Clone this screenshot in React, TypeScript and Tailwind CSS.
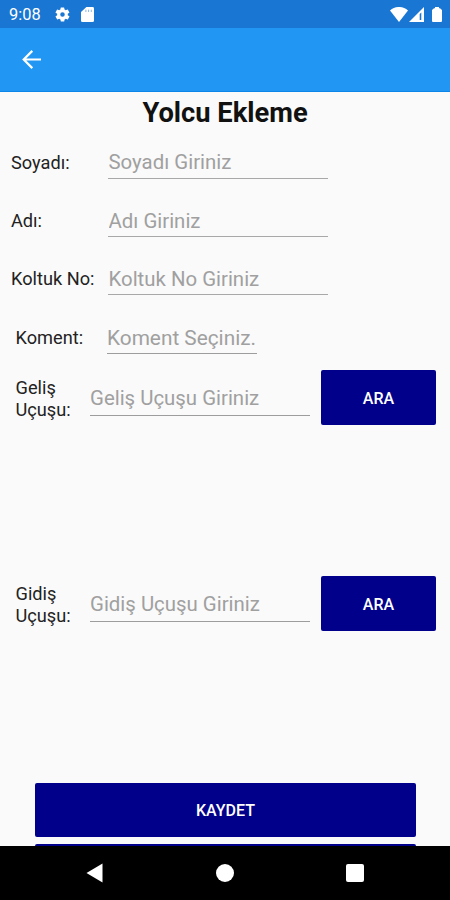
import React from 'react';

function Field({ placeholder, className }: { placeholder: string; className: string }) {
  return (
    <input
      type="text"
      placeholder={placeholder}
      className={`block rounded-none border-b bg-transparent p-0 leading-6 text-[#222] outline-none placeholder:text-[#a0a0a0] ${className}`}
    />
  );
}

function SimpleRow({ label, placeholder, className, fieldClass }: { label: string; placeholder: string; className: string; fieldClass: string }) {
  return (
    <div className={`flex pl-[11px] ${className}`}>
      <label className="w-[97px] shrink-0 pt-px text-[18.2px] leading-6 text-[#222]">{label}</label>
      <Field placeholder={placeholder} className={`h-[29px] w-[220px] border-[#a8a8a8] pl-[0.5px] text-[20.4px] ${fieldClass}`} />
    </div>
  );
}

function FlightRow({ first, placeholder, className }: { first: string; placeholder: string; className: string }) {
  return (
    <div className={`flex h-[55px] pl-[15px] ${className}`}>
      <label className="w-[75px] shrink-0 pt-[7px] pl-[0.5px] text-[18.2px] leading-[22px] text-[#222]">
        {first}
        <br />
        Uçuşu:
      </label>
      <Field placeholder={placeholder} className="mt-4 h-[30px] w-[220px] border-[#9d9d9d] pb-[5px] text-[20.4px]" />
      <button className="ml-[11px] h-[55px] w-[115px] rounded-[2px] bg-[#00008b] pt-[2px] text-[16px] font-medium text-white">
        ARA
      </button>
    </div>
  );
}

export default function App() {
  return (
    <div className="flex h-[900px] w-[450px] flex-col overflow-hidden bg-[#fafafa] font-[Roboto,sans-serif]">
      <div className="flex h-7 shrink-0 items-center bg-[#1976d2] text-white">
        <span className="ml-[9px] w-[45px] pt-[3px] text-[16.4px]">9:08</span>
        <svg className="h-[17px] w-[17px]" viewBox="0 0 24 24" fill="currentColor">
          <path d="M19.4 13a7.8 7.8 0 0 0 0-2l2.1-1.6a.5.5 0 0 0 .1-.7l-2-3.4a.5.5 0 0 0-.6-.2l-2.5 1a7.3 7.3 0 0 0-1.7-1l-.4-2.6a.5.5 0 0 0-.5-.5h-4a.5.5 0 0 0-.5.5L9 5.1a7.3 7.3 0 0 0-1.7 1l-2.5-1a.5.5 0 0 0-.6.2l-2 3.4a.5.5 0 0 0 .1.7L4.5 11a7.8 7.8 0 0 0 0 2l-2.1 1.6a.5.5 0 0 0-.1.7l2 3.4a.5.5 0 0 0 .6.2l2.5-1a7.3 7.3 0 0 0 1.7 1l.4 2.6a.5.5 0 0 0 .5.5h4a.5.5 0 0 0 .5-.5l.4-2.6a7.3 7.3 0 0 0 1.7-1l2.5 1a.5.5 0 0 0 .6-.2l2-3.4a.5.5 0 0 0-.1-.7zM12 15.2a3.2 3.2 0 1 1 0-6.4 3.2 3.2 0 0 1 0 6.4z" />
        </svg>
        <svg className="ml-[10px] h-[15px] w-[13px]" viewBox="0 0 12 15" preserveAspectRatio="none">
          <path d="M5 0h5.7Q12 0 12 1.3v12.2Q12 15 10.7 15H1.3Q0 15 0 13.5V5z" fill="white" />
          <path d="M4.5 2.7v2.3M7 2.7v2.3M9.5 2.7v2.3" stroke="#1976d2" strokeWidth=".5" />
        </svg>
        <svg className="ml-auto h-[15px] w-[18px]" viewBox="0 0 18 15" fill="currentColor">
          <path d="M0 3.5C5-1.2 13-1.2 18 3.5L9 15z" />
        </svg>
        <svg className="ml-px h-[15px] w-[15px]" viewBox="0 0 15 15">
          <path d="M15 0v15H0z" fill="white" />
          <path d="M12.3 5.5V13h-1.6V7z" fill="#1976d2" />
        </svg>
        <svg className="mr-2 ml-2 h-[15px] w-[10px]" viewBox="0 0 10 15" fill="currentColor">
          <path d="M3 0h4v1.2h1L10 3v11q0 1-1 1H1q-1 0-1-1V3l2-1.8h1z" />
        </svg>
      </div>
      <header className="flex h-16 shrink-0 items-center border-b border-[#0c86e8] bg-[#2196f3] pl-[22px] text-white">
        <svg className="h-[19px] w-[19px]" viewBox="0 0 19 19" fill="none" stroke="currentColor" strokeWidth="2.2">
          <path d="M19 9.5H2M10.3.9L1.7 9.5l8.6 8.6" />
        </svg>
      </header>
      <main className="min-h-0 flex-1 overflow-hidden">
        <h1 className="h-10 text-center text-[27.3px] leading-[42px] font-bold text-[#111]">Yolcu Ekleme</h1>
        <SimpleRow label="Soyadı:" placeholder="Soyadı Giriniz" className="mt-[18px]" fieldClass="pb-1" />
        <SimpleRow label="Adı:" placeholder="Adı Giriniz" className="mt-[29px]" fieldClass="pb-[3px]" />
        <SimpleRow label="Koltuk No:" placeholder="Koltuk No Giriniz" className="mt-[29px]" fieldClass="pb-[3px]" />
        <div className="mt-[30px] flex pl-[15px]">
          <label className="w-[92px] shrink-0 pt-px pl-[0.5px] text-[18.2px] leading-6 text-[#222]">Koment:</label>
          <Field placeholder="Koment Seçiniz." className="h-[29px] w-[150px] border-[#9d9d9d] pb-[3px] text-[20.8px]" />
        </div>
        <FlightRow first="Geliş" placeholder="Geliş Uçuşu Giriniz" className="mt-4" />
        <FlightRow first="Gidiş" placeholder="Gidiş Uçuşu Giriniz" className="mt-[151px]" />
        <div className="mt-[152px] flex flex-col gap-[7px] pr-[34px] pl-[35px]">
          <button className="h-[54px] rounded-[2px] bg-[#00008b] pt-px text-[16px] font-medium text-white">KAYDET</button>
          <div className="h-[54px] rounded-[2px] bg-[#00008b]" />
        </div>
      </main>
      <nav className="flex h-[54px] shrink-0 items-center bg-black pl-[86px]">
        <svg className="h-5 w-[17px]" viewBox="0 0 17 20">
          <path d="M16.5.5v19L.5 10z" fill="white" />
        </svg>
        <div className="ml-[113px] h-[18px] w-[18px] rounded-full bg-white" />
        <div className="ml-[112px] h-[18px] w-[18px] rounded-[2px] bg-white" />
      </nav>
    </div>
  );
}
